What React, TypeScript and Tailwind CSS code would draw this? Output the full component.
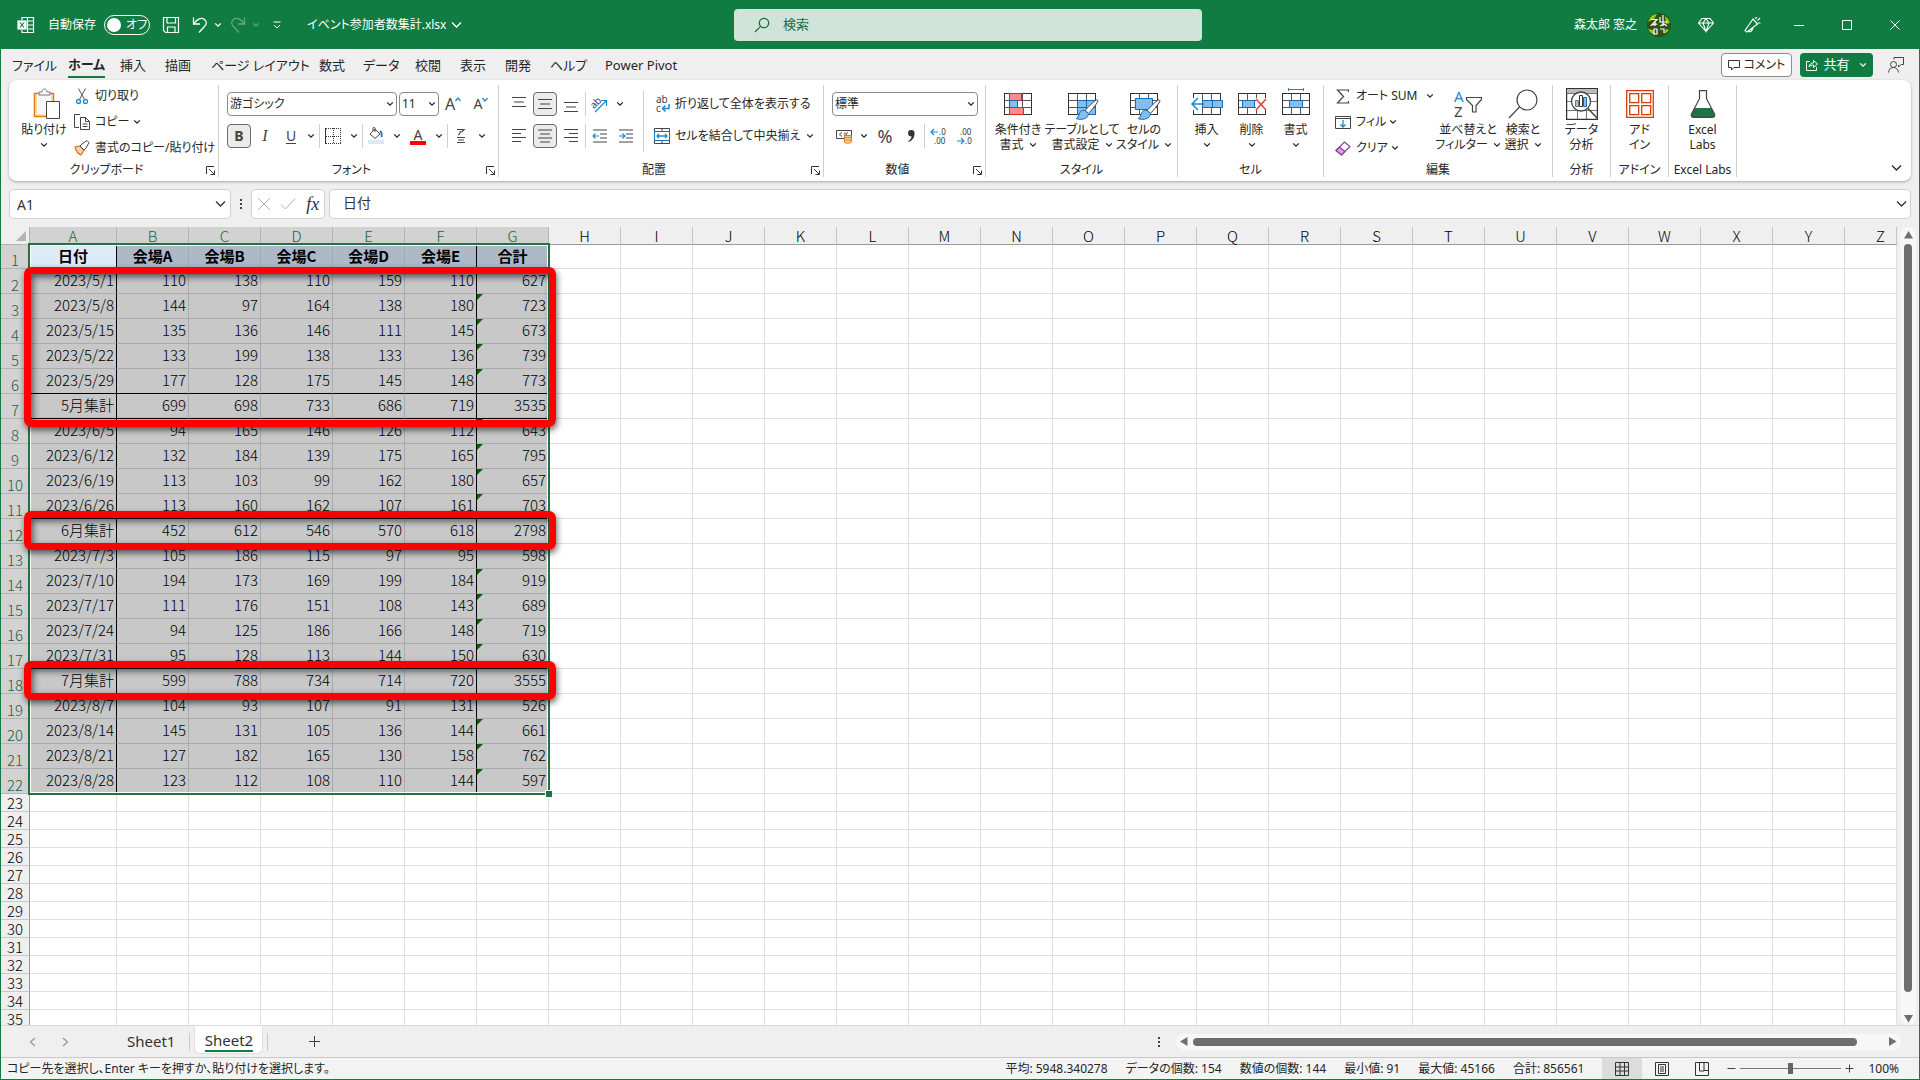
import React from "react";

type Props = { children?: React.ReactNode };

const tabs = [
  { name: "ファイル", width: "w-14" },
  { name: "ホーム", width: "w-[52px]", active: true },
  { name: "挿入", width: "w-[45px]" },
  { name: "描画", width: "w-[46px]" },
  { name: "ページ レイアウト", width: "w-[108px]" },
  { name: "数式", width: "w-[44px]" },
  { name: "データ", width: "w-[52px]" },
  { name: "校閲", width: "w-[45px]" },
  { name: "表示", width: "w-[45px]" },
  { name: "開発", width: "w-[45px]" },
  { name: "ヘルプ", width: "w-[55px]" },
  { name: "Power Pivot", width: "w-20" },
];

const letters = "ABCDEFGHIJKLMNOPQRSTUVWXYZ".split("");
const headers = ["日付", "会場A", "会場B", "会場C", "会場D", "会場E", "合計"];

const data = [
  ["2023/5/1", 110, 138, 110, 159, 110, 627],
  ["2023/5/8", 144, 97, 164, 138, 180, 723],
  ["2023/5/15", 135, 136, 146, 111, 145, 673],
  ["2023/5/22", 133, 199, 138, 133, 136, 739],
  ["2023/5/29", 177, 128, 175, 145, 148, 773],
  ["5月集計", 699, 698, 733, 686, 719, 3535],
  ["2023/6/5", 94, 165, 146, 126, 112, 643],
  ["2023/6/12", 132, 184, 139, 175, 165, 795],
  ["2023/6/19", 113, 103, 99, 162, 180, 657],
  ["2023/6/26", 113, 160, 162, 107, 161, 703],
  ["6月集計", 452, 612, 546, 570, 618, 2798],
  ["2023/7/3", 105, 186, 115, 97, 95, 598],
  ["2023/7/10", 194, 173, 169, 199, 184, 919],
  ["2023/7/17", 111, 176, 151, 108, 143, 689],
  ["2023/7/24", 94, 125, 186, 166, 148, 719],
  ["2023/7/31", 95, 128, 113, 144, 150, 630],
  ["7月集計", 599, 788, 734, 714, 720, 3555],
  ["2023/8/7", 104, 93, 107, 91, 131, 526],
  ["2023/8/14", 145, 131, 105, 136, 144, 661],
  ["2023/8/21", 127, 182, 165, 130, 158, 762],
  ["2023/8/28", 123, 112, 108, 110, 144, 597],
];

// rows whose total cell carries the green error mark
const flagged = [3, 4, 5, 6, 8, 9, 10, 11, 14, 15, 16, 17, 20, 21, 22];
// rows with a black rule under them
const ruled = [1, 6, 7, 11, 12, 17, 18];

const Chevron: React.FC<{ className?: string }> = ({ className = "" }) => (
  <svg width="8" height="6" viewBox="0 0 8 6" className={`shrink-0 ${className}`} fill="none" stroke="currentColor" strokeWidth="1.3">
    <path d="M1.2 1.4 4 4.2l2.8-2.8" />
  </svg>
);

const BigChevron: React.FC = () => (
  <svg width="11" height="8" viewBox="0 0 11 8" className="shrink-0" fill="none" stroke="currentColor" strokeWidth="1.3">
    <path d="M1 1.5 5.5 6 10 1.5" />
  </svg>
);

const Drop: React.FC<{ label: string }> = ({ label }) => (
  <button aria-label={label} className="flex h-6 w-4 items-center justify-center">
    <Chevron />
  </button>
);

const Divider: React.FC = () => <div className="h-6 w-px bg-[#d0d0d0]" />;

const Separator: React.FC = () => <div className="mt-[2px] mb-1 w-px shrink-0 bg-[#d0d0d0]" />;

const Tool: React.FC<Props & { label: string; width?: string; on?: boolean }> = ({ label, width = "w-6", on, children }) => (
  <button
    aria-label={label}
    className={`flex h-6 items-center justify-center ${width} ${on ? "rounded border border-[#6b6b6b] bg-[#ebebeb]" : ""}`}
  >
    {children}
  </button>
);

const Group: React.FC<Props & { title: string; width: string; launcher?: boolean }> = ({ title, width, launcher, children }) => (
  <section aria-label={title} className={`flex h-[98px] shrink-0 flex-col ${width}`}>
    <div className="flex h-[78px]">{children}</div>
    <div className="flex h-[18px] items-center">
      <span className="flex-1 text-center whitespace-nowrap">{title}</span>
      {launcher && (
        <button aria-label={`${title}の設定`} className="mr-[2px] flex w-3 justify-center">
          <svg width="9" height="9" viewBox="0 0 9 9" fill="none" stroke="#333">
            <path d="M.5 8V.5H8M3 3l5 5M8.500 4.500v4h-4" />
          </svg>
        </button>
      )}
    </div>
  </section>
);

const BigButton: React.FC<Props & { lines: string[]; width: string; drop?: "inline" | "below" }> = ({ lines, width, drop, children }) => (
  <button className={`flex flex-col items-center pt-[3px] ${width}`}>
    <span className="flex h-9 items-center justify-center">{children}</span>
    {lines.map((line, i) => (
      <span key={line} className="flex items-center gap-[5px] leading-[15px] whitespace-nowrap">
        {line}
        {drop === "inline" && i === lines.length - 1 && <Chevron />}
      </span>
    ))}
    {drop === "below" && <Chevron className="mt-[5px]" />}
  </button>
);

const RowButton: React.FC<Props & { text: string; drop?: boolean }> = ({ text, drop, children }) => (
  <button className="flex h-[26px] items-center whitespace-nowrap">
    <span className="mr-[5px] flex w-4 justify-center">{children}</span>
    {text}
    {drop && <Chevron className="ml-[3px]" />}
  </button>
);

const Combo: React.FC<{ label: string; value: string; width: string }> = ({ label, value, width }) => (
  <div className={`relative h-6 ${width}`}>
    <select aria-label={label} className="h-6 w-full appearance-none rounded border border-[#8a8a8a] bg-white pl-[2px]">
      <option>{value}</option>
    </select>
    <Chevron className="pointer-events-none absolute top-[9px] right-[3px]" />
  </div>
);

const Lines: React.FC<{ d: string; arrow?: string }> = ({ d, arrow }) => (
  <svg width="16" height="16" viewBox="0 0 16 16" className="shrink-0" fill="none" stroke="#444" strokeWidth="1.2">
    <path d={d} />
    {arrow && <path d={arrow} stroke="#1e88cf" />}
  </svg>
);

const Caret: React.FC<{ d: string }> = ({ d }) => (
  <svg width="6" height="16" viewBox="0 0 6 16" className="shrink-0" fill="none" stroke="#1e88cf" strokeWidth="1.3">
    <path d={d} />
  </svg>
);

// base cell grid shared by the style and cell icons
const CellGrid: React.FC<Props> = ({ children }) => (
  <svg width="34" height="34" viewBox="0 0 34 34" className="overflow-visible" fill="none" stroke="#555">
    <rect x="3.500" y="6.500" width="27" height="21" fill="#fff" stroke="#333" />
    <path d="M3.500 13.500h27M3.500 20.500h27M12.500 6.500v21M21.500 6.500v21" />
    {children}
  </svg>
);

const Brush: React.FC = () => (
  <g>
    <path d="M32.500 13c1 1 .5 2.500-9 13.500L20 23.500c8-8.500 11.500-11.500 12.500-10.500z" fill="#fff" stroke="#444" />
    <path d="M20 23.500c-3-1-5 .5-6 4-.5 2.500-2 3.500-3 4 5.500 2 12 .5 12.500-5z" fill="#83beec" stroke="#0f6cbd" />
  </g>
);

const TitleBar: React.FC = () => (
  <header className="grid h-[49px] shrink-0 grid-cols-[1fr_468px_1fr] items-center bg-[#107c41] pl-4 text-xs text-white">
    <div className="flex items-center whitespace-nowrap">
      <svg width="18" height="18" viewBox="0 0 18 18" fill="none" stroke="#fff" strokeWidth="1.200">
        <path d="M5 4V1.500h11.500v15H5V14M10.500 1.500v15M10 5h6.500M10 9h6.500M10 13h6.500" />
        <rect x="1" y="5" width="8" height="8" fill="#fff" />
        <path d="m3 6.500 4 5m0-5-4 5" stroke="#107c41" />
      </svg>
      <label htmlFor="autosave" className="ml-[13px]">自動保存</label>
      <span className="relative ml-2 flex h-5 w-[46px] items-center">
        <input id="autosave" type="checkbox" role="switch" className="absolute inset-0 appearance-none rounded-full border border-white" />
        <span className="pointer-events-none ml-[3px] h-[14px] w-[14px] rounded-full bg-white" />
        <span className="pointer-events-none ml-[5px]">オフ</span>
      </span>
      <button aria-label="上書き保存" className="ml-3">
        <svg width="18" height="18" viewBox="0 0 18 18" fill="none" stroke="#fff" strokeWidth="1.200">
          <path d="M1.500 1.500h15v15h-13l-2-2zM5 1.500V7h8.500V1.500M5.500 16.500V11H13v5.500" />
        </svg>
      </button>
      <button aria-label="元に戻す" className="ml-3 flex items-center gap-[6px]">
        <svg width="16" height="18" viewBox="0 0 16 18" fill="none" stroke="#fff" strokeWidth="1.300">
          <path d="M1.500 1.500V8H8M2 7.500C5 3 9.500 1 12.500 3.500s2 5-.5 7.500l-5 5.500" />
        </svg>
        <Chevron />
      </button>
      <button aria-label="やり直し" className="ml-2 flex items-center gap-[6px] text-[#5fa980]">
        <svg width="16" height="18" viewBox="0 0 16 18" fill="none" stroke="currentColor" strokeWidth="1.300">
          <path d="M14.500 1.500V8H8M14 7.500C11 3 6.500 1 3.500 3.500s-2 5 .5 7.500l5 5.500" />
        </svg>
        <Chevron />
      </button>
      <button aria-label="クイック アクセス ツール バーのユーザー設定" className="ml-[13px]">
        <svg width="8" height="8" viewBox="0 0 8 8" fill="none" stroke="#fff">
          <path d="M.5 1h7M1 4l3 3 3-3" />
        </svg>
      </button>
      <button className="ml-[26px] flex items-center gap-[5px]">
        イベント参加者数集計.xlsx
        <BigChevron />
      </button>
    </div>
    <div className="flex h-8 items-center rounded bg-[#cfe3d8] pl-5 text-[#1b6b41]">
      <svg width="16" height="16" viewBox="0 0 16 16" fill="none" stroke="currentColor" strokeWidth="1.200">
        <circle cx="10" cy="6" r="4.700" />
        <path d="M6.600 9.400 1 15" />
      </svg>
      <input aria-label="検索" placeholder="検索" className="ml-[13px] flex-1 bg-transparent text-[13px] placeholder:text-[#1b6b41]" />
    </div>
    <div className="flex items-center justify-end">
      <span>森太郎 窓之</span>
      <svg width="24" height="24" viewBox="0 0 24 24" className="mr-3 ml-[10px]">
        <circle cx="12" cy="12" r="12" fill="#2c5016" />
        <path d="M1 9a12 12 0 0 1 5-7l4-1-3 5zM18 3a12 12 0 0 1 5 7l-4 1zM1 16l5 1 2 5a12 12 0 0 1-7-6zM22 17l-3-1-2 5a12 12 0 0 0 5-4z" fill="#9acb1c" />
        <path d="M4 6.500h6L4.500 12l6-1M8 8v5M13 4v5h7M16 2v11M13 13l4-2 3 2M7 16v5h3v-5zM13 16h4v4" fill="none" stroke="#fff" strokeWidth="1.200" />
      </svg>
      <button aria-label="Microsoft 365" className="flex w-[46px] justify-center">
        <svg width="16" height="16" viewBox="0 0 16 16" className="shrink-0" fill="none" stroke="#fff" strokeWidth="1.100">
          <path d="M4 1.500h8L15.500 6 8 14.500.5 6zM.5 6h15M8 14.500 5 6l3-4.500L11 6z" />
        </svg>
      </button>
      <button aria-label="新機能" className="flex w-[46px] justify-center">
        <svg width="17" height="17" viewBox="0 0 17 17" className="shrink-0" fill="none" stroke="#fff" strokeWidth="1.200">
          <path d="M9 3 1 14.500l2 1.500L13.500 8zM5 14.500c0 2 2.500 2 4-2.500M11.500 3l1-2M13.500 4.500 16 2M14 7h2.500" />
        </svg>
      </button>
      {["M3 8.500h10", "M3.500 3.500h9v9h-9z", "m3.500 3.500 9 9m0-9-9 9"].map((d, i) => (
        <button key={d} aria-label={["最小化", "最大化", "閉じる"][i]} className="flex h-12 w-12 items-center justify-center">
          <svg width="16" height="16" viewBox="0 0 16 16" fill="none" stroke="#fff">
            <path d={d} />
          </svg>
        </button>
      ))}
    </div>
  </header>
);

const TabBar: React.FC = () => (
  <nav className="flex h-[31px] shrink-0 items-center pl-[11px] text-[13px]">
    {tabs.map((tab) => (
      <div key={tab.name} className={`shrink-0 whitespace-nowrap ${tab.width}`}>
        <button className={`h-[27px] pt-[3px] ${tab.active ? "border-b-2 border-[#107c41] font-bold" : ""}`}>{tab.name}</button>
      </div>
    ))}
    <div className="ml-auto flex items-center pr-[15px]">
      <button className="flex h-6 w-[71px] items-center justify-center gap-1 rounded border border-[#8a8a8a] bg-white text-xs">
        <svg width="12" height="12" viewBox="0 0 12 12" fill="none" stroke="#333">
          <path d="M.5 1.500h11v7H6L3.500 11V8.500h-3z" />
        </svg>
        コメント
      </button>
      <button className="ml-2 flex h-6 w-[73px] items-center justify-center gap-[5px] rounded bg-[#107c41] text-white">
        <svg width="12" height="12" viewBox="0 0 12 12" fill="none" stroke="#fff">
          <path d="M4 2.500H.5v9h10V8M3 8c.5-3 2-4 4.500-4V1.500l4 3.500-4 3.500V6C5.500 6 4 6.500 3 8z" />
        </svg>
        共有
        <Chevron className="ml-1" />
      </button>
      <button aria-label="ユーザー" className="ml-[15px]">
        <svg width="16" height="16" viewBox="0 0 16 16" fill="none" stroke="#444">
          <path d="M6 2.500v-2h9.500v7H13l-2.500 2.500V8M.5 15.500C1 12 3 10.500 5.500 10.500s4.500 1.500 5 5" />
          <circle cx="5.500" cy="7.500" r="3" />
        </svg>
      </button>
    </div>
  </nav>
);

const ClipboardGroup: React.FC = () => (
  <Group title="クリップボード" width="w-[209px]" launcher>
    <div className="ml-[9px]">
      <BigButton lines={["貼り付け"]} width="w-[52px]" drop="below">
        <svg width="30" height="32" viewBox="-3 0 30 32" className="overflow-visible" fill="none">
          <path d="M2.500 5.500h19v23h-19z" fill="#fbe3ae" stroke="#e07b1a" strokeWidth="1.500" />
          <path d="M5 6h14v20H5z" fill="#f7f7f7" />
          <path d="M7 7V4h3c0-4 5-4 5 0h3v3z" fill="#fff" stroke="#777" />
          <path d="M14.500 13.500h13v17h-13z" fill="#fff" stroke="#444" />
        </svg>
      </BigButton>
    </div>
    <div className="ml-1">
      <RowButton text="切り取り">
        <svg width="12" height="17" viewBox="0 0 12 17" fill="none" stroke="#555">
          <path d="m2.500.5 6 11M9.500.5l-6 11" />
          <circle cx="2.500" cy="13.500" r="2" stroke="#1e88cf" strokeWidth="1.300" />
          <circle cx="9.500" cy="13.500" r="2" stroke="#1e88cf" strokeWidth="1.300" />
        </svg>
      </RowButton>
      <div className="flex items-center">
        <RowButton text="コピー">
          <svg width="16" height="16" viewBox="0 0 16 16" className="shrink-0" fill="none" stroke="#444">
            <path d="M5 13.500H.5V.5H6M6.500 3.500h5l4 4v8h-9zM11.500 3.500v4h4M8.500 10h5M8.500 12.500h5" />
          </svg>
        </RowButton>
        <Drop label="コピーのオプション" />
      </div>
      <RowButton text="書式のコピー/貼り付け">
        <svg width="16" height="16" viewBox="0 0 16 16" className="shrink-0" fill="none">
          <path d="m1 7 5-1 4 4-3 5c-3-1-5-4-6-8z" fill="#fbd0a5" stroke="#d8741c" strokeWidth="1.200" />
          <path d="m6 6 2-2 5-3.500 2 2L12 8l-2 2z" fill="#fff" stroke="#444" />
        </svg>
      </RowButton>
    </div>
  </Group>
);

const FontGroup: React.FC = () => (
  <Group title="フォント" width="w-[279px]" launcher>
    <div className="flex flex-col gap-2 pt-[9px] pl-2">
      <div className="flex items-center">
        <Combo label="フォント" value="游ゴシック" width="w-[170px]" />
        <div className="ml-[2px]">
          <Combo label="フォント サイズ" value="11" width="w-10" />
        </div>
        <Tool label="フォント サイズの拡大" width="w-7">
          <span className="text-base text-[#444]">A</span>
          <Caret d="M.5 5 3 2l2.500 3" />
        </Tool>
        <Tool label="フォント サイズの縮小" width="w-7">
          <span className="text-sm text-[#444]">A</span>
          <Caret d="M.5 2 3 5l2.500-3" />
        </Tool>
      </div>
      <div className="flex items-center">
        <Tool label="太字" on>
          <span className="text-sm font-bold text-[#444]">B</span>
        </Tool>
        <Tool label="斜体" width="w-7">
          <span className="font-['Liberation_Serif',serif] text-base text-[#444] italic">I</span>
        </Tool>
        <Tool label="下線">
          <span className="text-sm text-[#444] underline underline-offset-2">U</span>
        </Tool>
        <Drop label="下線の種類" />
        <Divider />
        <Tool label="罫線" width="w-[26px]">
          <svg width="16" height="16" viewBox="0 0 16 16" fill="none" stroke="#333">
            <path d="M.5 0v16" />
            <path d="M1 .5h15M1 8.500h15M1 15.500h15M8.500 0v16M15.500 0v16" strokeDasharray="1 1" />
          </svg>
        </Tool>
        <Drop label="罫線の種類" />
        <Divider />
        <Tool label="塗りつぶしの色" width="w-[26px]">
          <svg width="16" height="18" viewBox="0 0 16 18" fill="none" stroke="#444">
            <path d="M0 13h16v4H0z" fill="#dbe9f6" stroke="none" />
            <path d="m2 7 5-5 5 5-5 4.500zM7 5V1.500c0-1.500-2-1.500-2 0V4" />
            <path d="M12 4c2 1 2 3 1.500 6" stroke="#1e6fb8" strokeWidth="1.800" />
          </svg>
        </Tool>
        <Drop label="塗りつぶしの色の一覧" />
        <Tool label="フォントの色" width="w-[26px]">
          <span className="flex flex-col items-center text-sm leading-[13px] text-[#444]">
            A
            <span className="h-1 w-4 bg-[#ff0000]" />
          </span>
        </Tool>
        <Drop label="フォントの色の一覧" />
        <Divider />
        <Tool label="ふりがな" width="w-[26px]">
          <Lines d="M4 1.500h7L8.500 4M7.500 3c0 2-1 3-2 4M4 9.500h8M5 12h6M4 14.500h8" />
        </Tool>
        <Drop label="ふりがなの設定" />
      </div>
    </div>
  </Group>
);

const AlignGroup: React.FC = () => (
  <Group title="配置" width="w-[324px]" launcher>
    <div className="flex flex-col gap-2 pt-[9px] pl-2">
      <div className="flex items-center gap-[2px]">
        <Tool label="上揃え"><Lines d="M1 1.500h14M3 6h10M1 10.500h14" /></Tool>
        <Tool label="上下中央揃え" on><Lines d="M1 3.500h14M3 8h10M1 12.500h14" /></Tool>
        <Tool label="下揃え"><Lines d="M1 6.500h14M3 11h10M1 15.500h14" /></Tool>
        <Divider />
        <Tool label="方向" width="w-[22px]">
          <svg width="18" height="18" viewBox="0 0 18 18" className="shrink-0 overflow-visible" fill="none" stroke="#444">
            <text x="0" y="11" fontSize="10" fill="#444" stroke="none" transform="rotate(-45 6 8)">ab</text>
            <path d="m5 17 11-11M11 5.500h5.500V11" stroke="#1e88cf" strokeWidth="1.200" />
          </svg>
        </Tool>
        <Drop label="方向の一覧" />
      </div>
      <div className="flex items-center gap-[2px]">
        <Tool label="左揃え"><Lines d="M1 1.500h14M1 5.500h9M1 9.500h14M1 13.500h9" /></Tool>
        <Tool label="中央揃え" on><Lines d="M1 2h14M3 6h10M1 10h14M3 14h10" /></Tool>
        <Tool label="右揃え"><Lines d="M1 1.500h14M6 5.500h9M1 9.500h14M6 13.500h9" /></Tool>
        <Divider />
        <Tool label="インデントを減らす"><Lines d="M1 2h14M8 6h7M8 10h7M1 14h14" arrow="M7 8H1m2.500-2.500L1 8l2.500 2.500" /></Tool>
        <Tool label="インデントを増やす"><Lines d="M1 2h14M8 6h7M8 10h7M1 14h14" arrow="M1 8h6M4.500 5.500 7 8l-2.500 2.500" /></Tool>
      </div>
    </div>
    <div className="mt-2 ml-auto h-[61px] w-px bg-[#d0d0d0]" />
    <div className="flex w-[174px] flex-col gap-[6px] pt-2 pl-[10px]">
      <RowButton text="折り返して全体を表示する">
        <svg width="16" height="18" viewBox="0 0 16 18" className="shrink-0 overflow-visible" fill="none">
          <text x="2" y="8" fontSize="10" fill="#444">ab</text>
          <text x="2" y="17" fontSize="10" fill="#444">c</text>
          <path d="M15 9v4.500H8.500m3-3-3 3 3 3" stroke="#1e88cf" strokeWidth="1.500" />
        </svg>
      </RowButton>
      <div className="flex items-center justify-between">
        <RowButton text="セルを結合して中央揃え">
          <svg width="16" height="16" viewBox="0 0 16 16" className="shrink-0" fill="none" stroke="#444">
            <path d="M.5.500h15v15H.5zM8 .5v3M8 12.500v3" />
            <path d="M.5 3.500h15v9H.5z" fill="#fff" stroke="#1e6fb8" />
            <path d="M3 8h10M5 6 3 8l2 2M11 6l2 2-2 2" stroke="#1e88cf" strokeWidth="1.300" />
          </svg>
        </RowButton>
        <Drop label="結合の種類" />
      </div>
    </div>
    <div className="w-[5px] shrink-0" />
  </Group>
);

const NumberGroup: React.FC = () => (
  <Group title="数値" width="w-[161px]" launcher>
    <div className="flex flex-col gap-2 pt-[9px] pl-2">
      <Combo label="表示形式" value="標準" width="w-[146px]" />
      <div className="flex items-center">
        <Tool label="通貨表示形式">
          <svg width="17" height="16" viewBox="0 0 17 16" fill="none" stroke="#444">
            <path d="M.5 2.500h15v8H.5zM6 5c-3-.5-3 3.500 0 3M9 4.500v4M12 4.500c-2 0-2 4 0 4" />
            <path d="M8.500 7.500h7V14c0 1.500-7 1.500-7 0z" fill="#fbd0a5" stroke="#e07b1a" />
            <path d="M8.500 9.500h7M8.500 12h7" stroke="#e07b1a" />
          </svg>
        </Tool>
        <Drop label="通貨の種類" />
        <Tool label="パーセント スタイル" width="w-[26px]"><span className="text-lg text-[#444]">%</span></Tool>
        <Tool label="桁区切りスタイル" width="w-[26px]">
          <svg width="8" height="14" viewBox="0 0 8 14" fill="#333"><path d="M4 1a3 3 0 0 1 3.500 3.500C7.500 9 5 12 1.500 13v-1C3.500 11 4.500 9 4.500 7.300A3 3 0 1 1 4 1z" /></svg>
        </Tool>
        <Divider />
        <Tool label="小数点以下の表示桁数を増やす" width="w-[26px]">
          <svg width="17" height="18" viewBox="0 0 17 18" className="shrink-0 overflow-visible" fill="none">
            <text x="9" y="8" fontSize="8" fill="#333">.0</text>
            <text x="4" y="17" fontSize="8" fill="#333">.00</text>
            <path d="M8 5H1m3-3L1 5l3 3" stroke="#1e88cf" strokeWidth="1.200" />
          </svg>
        </Tool>
        <Tool label="小数点以下の表示桁数を減らす" width="w-[26px]">
          <svg width="17" height="18" viewBox="0 0 17 18" className="shrink-0 overflow-visible" fill="none">
            <text x="4" y="8" fontSize="8" fill="#333">.00</text>
            <text x="9" y="17" fontSize="8" fill="#333">.0</text>
            <path d="M1 14h7M5 11l3 3-3 3" stroke="#1e88cf" strokeWidth="1.200" />
          </svg>
        </Tool>
      </div>
    </div>
  </Group>
);

const StyleGroup: React.FC = () => (
  <Group title="スタイル" width="w-[191px]">
    <BigButton lines={["条件付き", "書式"]} width="w-16" drop="inline">
      <CellGrid>
        <path d="M8.500 6.500h12v7h-12zM8.500 20.500h14v7h-14z" fill="#ff8a8a" stroke="#d92a2a" />
        <path d="M8.500 13.500h8v7h-8z" fill="#83beec" stroke="#0f6cbd" />
      </CellGrid>
    </BigButton>
    <BigButton lines={["テーブルとして", "書式設定"]} width="w-16" drop="inline">
      <CellGrid>
        <path d="M12.500 13.500h18v14h-18z" fill="#83beec" stroke="#0f6cbd" />
        <path d="M21.500 13.500v14M12.500 20.500h18" stroke="#0f6cbd" />
        <Brush />
      </CellGrid>
    </BigButton>
    <BigButton lines={["セルの", "スタイル"]} width="w-[60px]" drop="inline">
      <CellGrid>
        <path d="M8.500 11.500h17v11h-17z" fill="#83beec" stroke="#0f6cbd" />
        <Brush />
      </CellGrid>
    </BigButton>
  </Group>
);

const CellsGroup: React.FC = () => (
  <Group title="セル" width="w-[145px]">
    <div className="w-[6px]" />
    <BigButton lines={["挿入"]} width="w-[45px]" drop="below">
      <CellGrid>
        <path d="M12.500 13.500h20v7h-20zM22.500 13.500v7" fill="#83beec" stroke="#0f6cbd" />
        <path d="M2 11h10v12H2z" fill="#fff" stroke="none" />
        <path d="M14 17H2m6-6-6 6 6 6" stroke="#1e88cf" strokeWidth="1.500" />
      </CellGrid>
    </BigButton>
    <BigButton lines={["削除"]} width="w-[45px]" drop="below">
      <CellGrid>
        <path d="M7.500 13.500h12v7h-12z" fill="#83beec" stroke="#0f6cbd" />
        <path d="M21 11h11v12H21z" fill="#fff" stroke="none" />
        <path d="m21 12 10 11m0-11L21 23" stroke="#e53e3e" strokeWidth="1.500" />
      </CellGrid>
    </BigButton>
    <BigButton lines={["書式"]} width="w-[43px]" drop="below">
      <CellGrid>
        <path d="M10.500 13.500h13v7h-13z" fill="#83beec" stroke="#0f6cbd" />
        <path d="M9.500 1v3M24.500 1v3M10 2.500h14" stroke="#1e88cf" />
      </CellGrid>
    </BigButton>
  </Group>
);

const EditGroup: React.FC = () => (
  <Group title="編集" width="w-[228px]">
    <div className="w-[114px] pl-[11px]">
      <div className="flex items-center justify-between">
        <RowButton text="オート SUM">
          <svg width="14" height="15" viewBox="0 0 14 15" fill="none" stroke="#444" strokeWidth="1.200">
            <path d="M12.500 3V1H1.500l6 6.500-6 6.500h11v-2" />
          </svg>
        </RowButton>
        <Drop label="合計の種類" />
      </div>
      <RowButton text="フィル" drop>
        <svg width="16" height="15" viewBox="0 0 16 15" fill="none" stroke="#444">
          <path d="M.5 1.500h15v12H.5zM.5 3.500h15" />
          <path d="M8 5v7M5.500 9.500 8 12l2.500-2.500" stroke="#1e88cf" strokeWidth="1.300" />
        </svg>
      </RowButton>
      <RowButton text="クリア" drop>
        <svg width="16" height="15" viewBox="0 0 16 15" fill="none" stroke="#8b3fa0" strokeWidth="1.200">
          <path d="M1 9.500 9.500 1 15 5.500 6.500 14z" fill="#fff" />
          <path d="M1 9.500 4.500 6l5.500 4.500L6.500 14z" fill="#d9a3e6" />
        </svg>
      </RowButton>
    </div>
    <BigButton lines={["並べ替えと", "フィルター"]} width="w-[60px]" drop="inline">
      <svg width="32" height="30" viewBox="0 0 32 30" className="overflow-visible" fill="none">
        <text x="2" y="13" fontSize="15" fill="#1e88cf">A</text>
        <text x="2" y="28" fontSize="15" fill="#444">Z</text>
        <path d="M14.500 8.500h15v2L24 16.500V23h-3.500v-6.500l-6-6z" stroke="#444" strokeWidth="1.200" />
      </svg>
    </BigButton>
    <BigButton lines={["検索と", "選択"]} width="w-[50px]" drop="inline">
      <svg width="32" height="32" viewBox="0 0 32 32" fill="none" stroke="#444" strokeWidth="1.200">
        <circle cx="20" cy="12" r="10" />
        <path d="M12.500 19 2 30" />
      </svg>
    </BigButton>
  </Group>
);

const Ribbon: React.FC = () => (
  <div className="mx-2 flex h-[101px] shrink-0 overflow-hidden rounded-lg bg-white pt-[3px] text-xs shadow-[0_1px_3px_rgba(0,0,0,0.3)]">
    <ClipboardGroup />
    <Separator />
    <FontGroup />
    <Separator />
    <AlignGroup />
    <Separator />
    <NumberGroup />
    <Separator />
    <StyleGroup />
    <Separator />
    <CellsGroup />
    <Separator />
    <EditGroup />
    <Separator />
    <Group title="分析" width="w-[57px]">
      <BigButton lines={["データ", "分析"]} width="w-full">
        <svg width="32" height="32" viewBox="0 0 32 32" fill="none" stroke="#777">
          <path d="M.5.500h31v31H.5z" stroke="#333" strokeWidth="1.500" />
          <path d="M1 1h30v4H1z" fill="#bbb" stroke="none" />
          <path d="M1 5.500h30M1 13.500h30M1 22.500h30M11.500 22v9M20.500 22v9" />
          <circle cx="15" cy="13.500" r="9.500" fill="#fff" stroke="#444" strokeWidth="1.300" />
          <path d="m22 20.500 9 9.500" stroke="#444" strokeWidth="1.500" />
          <path d="M9.500 12.500h3v6h-3z" fill="#bbb" />
          <path d="M13.500 7.500h3v11h-3z" fill="#fff" stroke="#333" />
          <path d="M17.500 9.500h3v9h-3z" fill="#83beec" stroke="#0f6cbd" />
        </svg>
      </BigButton>
    </Group>
    <Separator />
    <Group title="アドイン" width="w-[57px]">
      <BigButton lines={["アド", "イン"]} width="w-full">
        <svg width="28" height="28" viewBox="0 0 28 28" fill="none" stroke="#d83b01" strokeWidth="1.300">
          <path d="M.7.700h26.600v26.600H.7zM3.700 3.700h9v9h-9zM15.700 3.700h9v9h-9zM3.700 15.700h9v9h-9zM15.700 15.700h9v9h-9z" />
        </svg>
      </BigButton>
    </Group>
    <Separator />
    <Group title="Excel Labs" width="w-[67px]">
      <BigButton lines={["Excel", "Labs"]} width="w-full">
        <svg width="26" height="28" viewBox="0 0 26 28" fill="none">
          <path d="M4.500 18h17l3 6.500c.5 1.500 0 3-2 3h-19c-2 0-2.500-1.500-2-3z" fill="#217346" />
          <path d="M9.500.700h7v8L24.500 24c.7 1.500 0 3.300-2 3.300h-19c-2 0-2.700-1.800-2-3.300l8-15.300z" stroke="#444" strokeWidth="1.200" />
        </svg>
      </BigButton>
    </Group>
    <Separator />
    <button aria-label="リボンを折りたたむ" className="mr-[9px] mb-[9px] ml-auto self-end">
      <BigChevron />
    </button>
  </div>
);

const FormulaBar: React.FC = () => (
  <div className="flex h-[46px] shrink-0 px-2 pt-2 pb-2 text-sm text-[#333]">
    <div className="flex w-[222px] shrink-0 items-center rounded border border-[#d0d0d0] bg-white pr-[4px] pl-[7px]">
      <input aria-label="名前ボックス" defaultValue="A1" className="min-w-0 flex-1 pt-[2px]" />
      <BigChevron />
    </div>
    <div className="flex w-5 shrink-0 flex-col items-center justify-center gap-[2px]">
      <span className="h-[2px] w-[2px] bg-[#444]" />
      <span className="h-[2px] w-[2px] bg-[#444]" />
      <span className="h-[2px] w-[2px] bg-[#444]" />
    </div>
    <div className="flex w-[74px] shrink-0 items-center justify-around rounded border border-[#d0d0d0] bg-white">
      <button aria-label="キャンセル">
        <svg width="14" height="14" viewBox="0 0 14 14" stroke="#b5b5b5"><path d="m1 1 12 12M13 1 1 13" /></svg>
      </button>
      <button aria-label="入力">
        <svg width="16" height="14" viewBox="0 0 16 14" fill="none" stroke="#b5b5b5"><path d="m1 7.500 4.500 4.500L15 1.500" /></svg>
      </button>
      <button aria-label="関数の挿入" className="font-['Liberation_Serif',serif] text-lg leading-5 italic">fx</button>
    </div>
    <div className="ml-1 flex flex-1 items-center rounded border border-[#d0d0d0] bg-white pr-[3px] pl-[13px]">
      <input aria-label="数式バー" defaultValue="日付" className="min-w-0 flex-1 pb-[2px]" />
      <BigChevron />
    </div>
  </div>
);

const SheetRow: React.FC<{ row: number }> = ({ row }) => {
  const inRange = row <= 22;
  const height = row === 1 ? "h-6" : inRange ? "h-[25px]" : "h-[18px]";
  const cells = row === 1 ? headers : data[row - 2];

  return (
    <tr className={height}>
      <th
        scope="row"
        className={`border-r border-b p-0 font-light ${
          inRange
            ? "border-[#b4b4b4] bg-[#d2d2d2] align-bottom leading-4 text-[#1f6043]"
            : "border-r-[#999999] border-b-[#c8c8c8] bg-[#efefef] leading-[17px] text-black"
        }`}
      >
        {row}
      </th>
      {letters.map((letter, col) => {
        if (!inRange || col > 6) {
          return <td key={letter} className="border-r border-b border-[#e0e0e0] p-0" />;
        }
        const fill = row > 1 ? "bg-[#c8c8c8]" : col === 0 ? "bg-[#ddebf7]" : "bg-[#adb9c6]";
        return (
          <td
            key={letter}
            className={`border-r border-b p-0 align-top whitespace-nowrap ${fill} ${
              row === 1 ? "text-center font-bold" : "text-right font-light"
            } ${col === 0 || col === 5 ? "border-r-black" : "border-r-[#ababab]"} ${
              ruled.includes(row) ? "border-b-black" : "border-b-[#ababab]"
            }`}
          >
            <div className={`relative leading-[21px] ${row === 1 ? "" : "pr-[2px]"}`}>
              {cells[col]}
              {col === 6 && flagged.includes(row) && (
                <svg width="6" height="6" viewBox="0 0 6 6" className="absolute top-0 left-0" fill="#006100">
                  <path d="M0 0h6L0 6z" />
                </svg>
              )}
            </div>
          </td>
        );
      })}
    </tr>
  );
};

const Frame: React.FC<{ place: string }> = ({ place }) => (
  <div
    className={`pointer-events-none absolute left-[23px] w-[532px] rounded-[7px] border-[7px] border-[#ff0000] shadow-[1px_3px_6px_rgba(0,0,0,0.6),inset_2px_3px_7px_rgba(0,0,0,0.6)] ${place}`}
  />
);

const Sheet: React.FC = () => (
  <main className="flex min-h-0 flex-1">
    <div className="relative min-w-0 flex-1 overflow-hidden bg-white">
      <table className="w-full min-w-[1896px] table-fixed border-separate border-spacing-0 font-['Noto_Sans_CJK_JP',sans-serif] text-[15px] text-black">
        <colgroup>
          <col className="w-[29px]" />
          <col className="w-[87px]" />
          {letters.slice(1, 25).map((letter) => (
            <col key={letter} className="w-[72px]" />
          ))}
          <col />
        </colgroup>
        <thead>
          <tr className="h-[18px]">
            <th aria-label="すべて選択" className="border-r border-b border-[#b4b4b4] bg-[#efefef] p-0 align-bottom">
              <svg width="10" height="10" viewBox="0 0 10 10" className="mr-[3px] mb-[3px] ml-auto" fill="#b4b4b4">
                <path d="M10 0v10H0z" />
              </svg>
            </th>
            {letters.map((letter, col) => (
              <th
                key={letter}
                scope="col"
                className={`border-r border-b p-0 leading-[17px] font-light ${
                  col < 7 ? "border-[#b4b4b4] bg-[#d2d2d2] text-[#1f6043]" : "border-r-[#c4c4c4] border-b-[#999999] bg-[#efefef]"
                } ${col === 25 ? "pl-5" : ""}`}
              >
                {letter}
              </th>
            ))}
          </tr>
        </thead>
        <tbody>
          {Array.from({ length: 35 }, (_, i) => (
            <SheetRow key={i} row={i + 1} />
          ))}
        </tbody>
      </table>

      {/* Selection outline and fill handle */}
      <div className="pointer-events-none absolute top-4 left-[27px] h-[552px] w-[522px] border-2 border-[#217346] shadow-[inset_0_0_0_1px_#ffffff]">
        <span className="absolute -right-1 -bottom-1 h-[7px] w-[7px] border-t border-l border-white bg-[#217346]" />
      </div>

      {/* Highlight frames */}
      <Frame place="top-10 h-40" />
      <Frame place="top-[284px] h-[39px]" />
      <Frame place="top-[434px] h-[39px]" />
    </div>

    {/* Vertical scroll bar */}
    <div className="flex w-[22px] shrink-0 justify-center">
      <div className="flex w-4 flex-col items-center rounded-full bg-[#f7f7f7] pt-1 pb-[2px]">
        <svg width="9" height="8" viewBox="0 0 9 8" fill="#6e6e6e"><path d="M4.500 0 9 7.500H0z" /></svg>
        <div className="mt-[5px] mb-[23px] w-2 flex-1 rounded-full bg-[#6e6e6e]" />
        <svg width="9" height="8" viewBox="0 0 9 8" fill="#6e6e6e"><path d="M0 0h9L4.500 7.500z" /></svg>
      </div>
    </div>
  </main>
);

const SheetTabs: React.FC = () => (
  <div className="flex h-8 shrink-0 items-center border-t border-[#d8d8d8] text-[15px] text-[#333]">
    <button aria-label="前のシート" className="ml-7">
      <svg width="7" height="10" viewBox="0 0 7 10" fill="none" stroke="#999" strokeWidth="1.300"><path d="M6 1 1.500 5 6 9" /></svg>
    </button>
    <button aria-label="次のシート" className="ml-[26px]">
      <svg width="7" height="10" viewBox="0 0 7 10" fill="none" stroke="#999" strokeWidth="1.300"><path d="M1 1l4.500 4L1 9" /></svg>
    </button>
    <button className="ml-[58px]">Sheet1</button>
    <div className="ml-[14px] h-[18px] w-px bg-[#c8c8c8]" />
    <button className="ml-1 h-7 w-[69px] self-start rounded-b-md border-x border-b border-[#e0e0e0] bg-white leading-5">
      <span className="border-b-2 border-[#107c41]">Sheet2</span>
    </button>
    <div className="ml-1 h-[18px] w-px bg-[#c8c8c8]" />
    <button aria-label="新しいシート" className="ml-10">
      <svg width="13" height="13" viewBox="0 0 13 13" stroke="#444"><path d="M6.500 1v11M1 6.500h11" /></svg>
    </button>

    {/* Horizontal scroll bar */}
    <div className="mr-[18px] ml-auto flex w-[39%] items-center">
      <svg width="12" height="12" viewBox="0 0 2 12" className="shrink-0" fill="#444"><path d="M0 1h2v2H0zM0 5h2v2H0zM0 9h2v2H0z" /></svg>
      <div className="ml-[11px] flex h-4 flex-1 items-center rounded-full bg-[#f7f7f7] pl-1">
        <svg width="8" height="9" viewBox="0 0 8 9" fill="#6e6e6e"><path d="M7.500 0v9L0 4.500z" /></svg>
        <div className="mr-8 ml-[5px] h-2 flex-1 rounded-full bg-[#6e6e6e]" />
        <svg width="8" height="9" viewBox="0 0 8 9" className="mr-1" fill="#6e6e6e"><path d="M0 0v9l7.500-4.500z" /></svg>
      </div>
    </div>
  </div>
);

const views = [
  { name: "標準", d: "M1.500 1.500h13v13h-13zM1.500 6h13M1.500 10h13M6 1.500v13M10.500 1.500v13" },
  { name: "ページ レイアウト表示", d: "M1.500 1.500h13v13h-13zM4.500 3.500h7v9h-7zM6 6h4M6 8h4M6 10h4" },
  { name: "改ページ プレビュー", d: "M1.500 14.500v-13h13v13zM5.500 1.500V10h4.500V1.500M10 9.500h4.500" },
];

const StatusBar: React.FC = () => (
  <footer className="flex h-[22px] shrink-0 items-center border-t border-[#c8c8c8] bg-[#f3f3f3] pl-[6px] text-xs whitespace-nowrap">
    <span>コピー先を選択し、Enter キーを押すか、貼り付けを選択します。</span>
    <div className="ml-auto flex gap-[18px]">
      <span>平均: 5948.340278</span>
      <span>データの個数: 154</span>
      <span>数値の個数: 144</span>
      <span>最小値: 91</span>
      <span>最大値: 45166</span>
      <span>合計: 856561</span>
    </div>
    <div className="ml-[18px] flex">
      {views.map((view, i) => (
        <button key={view.name} aria-label={view.name} className={`flex h-[21px] w-10 items-center justify-center ${i === 0 ? "bg-[#dcdcdc]" : ""}`}>
          <svg width="16" height="16" viewBox="0 0 16 16" fill="none" stroke="#333"><path d={view.d} /></svg>
        </button>
      ))}
    </div>
    <button aria-label="縮小" className="ml-[5px]">
      <svg width="9" height="9" viewBox="0 0 9 9" stroke="#444"><path d="M.5 4.500h8" /></svg>
    </button>
    <input
      type="range"
      aria-label="ズーム"
      defaultValue={50}
      className="mx-1 h-px w-[101px] appearance-none bg-[#777777] [&::-webkit-slider-thumb]:h-[11px] [&::-webkit-slider-thumb]:w-[5px] [&::-webkit-slider-thumb]:appearance-none [&::-webkit-slider-thumb]:bg-[#666666]"
    />
    <button aria-label="拡大">
      <svg width="9" height="9" viewBox="0 0 9 9" stroke="#444"><path d="M.5 4.500h8M4.500.5v8" /></svg>
    </button>
    <button className="mr-5 ml-[14px]">100%</button>
  </footer>
);

const App: React.FC = () => {
  return (
    <div className="flex h-screen flex-col overflow-hidden border-x border-b border-[#107c41] bg-[#efefef] font-['Noto_Sans','Noto_Sans_CJK_JP',sans-serif] text-[#262626] [font-feature-settings:'palt']">
      <TitleBar />
      <TabBar />
      <Ribbon />
      <FormulaBar />
      <Sheet />
      <SheetTabs />
      <StatusBar />
    </div>
  );
};

export default App;
